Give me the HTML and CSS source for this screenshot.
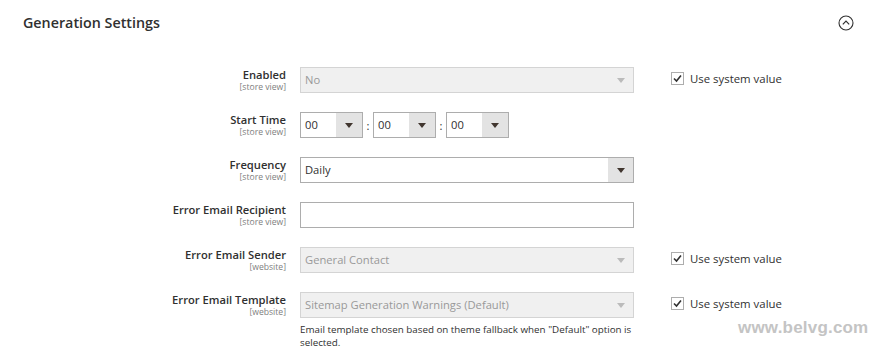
FILE: index.html
```html
<!DOCTYPE html>
<html lang="en">
  <head>
    <meta charset="UTF-8" />
    <meta name="viewport" content="width=device-width, initial-scale=1.0" />
    <title>Generation Settings</title>
    <link rel="stylesheet" href="styles.css">
  </head>
  <body>
    <div class="section-head">
      <h2>Generation Settings</h2>
      <svg class="collapse" width="16" height="16" viewBox="0 0 16 16">
        <circle cx="8" cy="8" r="7" fill="none" stroke="#303030" stroke-width="1.1" />
        <path d="M4.8 9.4 L8 6.2 L11.2 9.4" fill="none" stroke="#303030" stroke-width="1.2" />
      </svg>
    </div>

    <div class="fieldset">
      <div class="row">
        <div class="label">Enabled<span class="scope">[store view]</span></div>
        <div class="control">
          <div class="select disabled"><span class="value">No</span><span class="arrow"></span></div>
        </div>
        <label class="use-default">
          <span class="check"><svg width="9" height="9" viewBox="0 0 9 9"><path d="M1 4.5 L3.5 7 L8 1.5" fill="none" stroke="#303030" stroke-width="1.6" /></svg></span>
          Use system value
        </label>
      </div>

      <div class="row">
        <div class="label">Start Time<span class="scope">[store view]</span></div>
        <div class="control time">
          <div class="select small"><span class="value">00</span><span class="arrow"></span></div>
          <span class="colon">:</span>
          <div class="select small"><span class="value">00</span><span class="arrow"></span></div>
          <span class="colon">:</span>
          <div class="select small"><span class="value">00</span><span class="arrow"></span></div>
        </div>
      </div>

      <div class="row">
        <div class="label">Frequency<span class="scope">[store view]</span></div>
        <div class="control">
          <div class="select"><span class="value">Daily</span><span class="arrow"></span></div>
        </div>
      </div>

      <div class="row">
        <div class="label">Error Email Recipient<span class="scope">[store view]</span></div>
        <div class="control">
          <input type="text" class="text-input" />
        </div>
      </div>

      <div class="row">
        <div class="label">Error Email Sender<span class="scope">[website]</span></div>
        <div class="control">
          <div class="select disabled"><span class="value">General Contact</span><span class="arrow"></span></div>
        </div>
        <label class="use-default">
          <span class="check"><svg width="9" height="9" viewBox="0 0 9 9"><path d="M1 4.5 L3.5 7 L8 1.5" fill="none" stroke="#303030" stroke-width="1.6" /></svg></span>
          Use system value
        </label>
      </div>

      <div class="row">
        <div class="label">Error Email Template<span class="scope">[website]</span></div>
        <div class="control">
          <div class="select disabled"><span class="value">Sitemap Generation Warnings (Default)</span><span class="arrow"></span></div>
          <p class="note">Email template chosen based on theme fallback when "Default" option is selected.</p>
        </div>
        <label class="use-default">
          <span class="check"><svg width="9" height="9" viewBox="0 0 9 9"><path d="M1 4.5 L3.5 7 L8 1.5" fill="none" stroke="#303030" stroke-width="1.6" /></svg></span>
          Use system value
        </label>
      </div>
    </div>

    <div class="watermark">www.belvg.com</div>
  </body>
</html>
```

FILE: styles.css
```css
body {
  margin: 0;
  font-family: "Open Sans", Arial, sans-serif;
  color: #303030;
  background: #fff;
  position: relative;
  height: 356px;
  overflow: hidden;
}
.section-head {
  display: flex;
  justify-content: space-between;
  align-items: center;
  height: 44px;
  padding: 0 31px 0 23px;
}
.section-head h2 {
  margin: 0;
  font-size: 14.3px;
  font-weight: 600;
  color: #303030;
}
.collapse {
  display: block;
  margin-top: 1px;
}
.fieldset {
  padding-top: 23px;
}
.row {
  display: grid;
  grid-template-columns: 286px 334px auto;
  column-gap: 14px;
  margin-bottom: 19px;
  align-items: start;
}
.label {
  text-align: right;
  font-size: 11.2px;
  font-weight: 600;
  line-height: 13px;
  padding-top: 1px;
  height: 25px;
}
.scope {
  display: block;
  font-size: 8.6px;
  font-weight: 400;
  color: #808080;
  line-height: 12px;
}
.control {
  font-size: 11.2px;
}
.select {
  display: flex;
  height: 26px;
  box-sizing: border-box;
  border: 1px solid #adadad;
  background: #fff;
}
.select .value {
  flex: 1;
  padding-left: 4px;
  line-height: 24px;
  white-space: nowrap;
  overflow: hidden;
}
.select .arrow {
  width: 25px;
  background: #e3e3e3;
  position: relative;
}
.select .arrow:after {
  content: "";
  position: absolute;
  left: 9px;
  top: 10px;
  border-left: 4px solid transparent;
  border-right: 4px solid transparent;
  border-top: 5px solid #41362f;
}
.select.disabled {
  background: #f0f0f0;
  border-color: #d4d4d4;
  color: #999;
}
.select.disabled .arrow {
  background: transparent;
}
.select.disabled .arrow:after {
  border-top-color: #bbb;
}
.time {
  display: flex;
  align-items: center;
}
.select.small {
  width: 63px;
  flex: none;
}
.select.small .arrow {
  width: 26px;
}
.colon {
  width: 10px;
  text-align: center;
  font-size: 11.2px;
}
.text-input {
  display: block;
  width: 100%;
  height: 26px;
  box-sizing: border-box;
  border: 1px solid #adadad;
  margin: 0;
  padding: 0 4px;
  font: inherit;
}
.note {
  margin: 5px 0 0;
  font-size: 9.8px;
  line-height: 13px;
  color: #303030;
}
.use-default {
  display: flex;
  align-items: center;
  gap: 6px;
  padding-left: 23px;
  height: 23px;
  font-size: 11.4px;
  white-space: nowrap;
}
.check {
  display: flex;
  align-items: center;
  justify-content: center;
  width: 11px;
  height: 11px;
  border: 1px solid #adadad;
  background: #fff;
}
.watermark {
  position: absolute;
  left: 738px;
  top: 318px;
  font-family: "Liberation Sans", Arial, sans-serif;
  font-weight: bold;
  font-size: 17px;
  color: #c4c4c4;
  letter-spacing: 0.2px;
}
```
